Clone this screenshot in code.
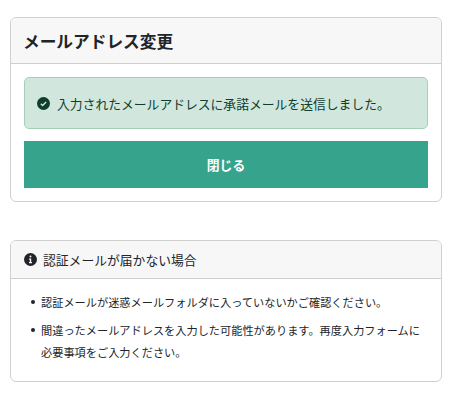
<script>
  let closed = false;
</script>

<main class="page">
  <section class="card first">
    <h1 class="card-head title">メールアドレス変更</h1>
    <div class="card-body">
      <div class="alert">
        <svg class="icon" viewBox="0 0 512 512" aria-hidden="true">
          <circle cx="256" cy="256" r="256" fill="#0f3d2e" />
          <path d="M152 262l70 70 138-138" fill="none" stroke="#d1e7dd" stroke-width="56" />
        </svg>
        <span>入力されたメールアドレスに承諾メールを送信しました。</span>
      </div>
      <button type="button" class="btn" on:click={() => (closed = true)}>閉じる</button>
    </div>
  </section>

  <section class="card second">
    <h2 class="card-head sub">
      <svg class="icon" viewBox="0 0 512 512" aria-hidden="true">
        <circle cx="256" cy="256" r="256" fill="#212529" />
        <circle cx="256" cy="136" r="38" fill="#f7f7f7" />
        <path d="M200 218h84v134h32v50H196v-50h32v-84h-28z" fill="#f7f7f7" />
      </svg>
      認証メールが届かない場合
    </h2>
    <ul class="notes">
      <li>認証メールが迷惑メールフォルダに入っていないかご確認ください。</li>
      <li>間違ったメールアドレスを入力した可能性があります。再度入力フォームに必要事項をご入力ください。</li>
    </ul>
  </section>
</main>

<style>
  * {
    box-sizing: border-box;
  }
  :global(body) {
    margin: 0;
    background: #fff;
    font-family: "Noto Sans CJK JP", "Noto Sans", sans-serif;
    color: #212529;
  }

  .page {
    padding: 17px 10px 0;
    height: 400px;
    overflow: hidden;
  }

  .card {
    border: 1px solid #d0d0d0;
    border-radius: 6px;
    overflow: hidden;
    background: #fff;
  }
  .second {
    margin-top: 38px;
  }

  .card-head {
    margin: 0;
    background: #f7f7f7;
    border-bottom: 1px solid #cfcfcf;
    display: flex;
    align-items: center;
  }
  .title {
    height: 46px;
    padding: 1px 12px 0;
    font-size: 16.7px;
    font-weight: 700;
    line-height: 1;
  }
  .sub {
    height: 38px;
    padding: 0 13px;
    font-size: 12.8px;
    font-weight: 400;
    gap: 6px;
  }

  .card-body {
    padding: 13px 13px 13px;
    display: flex;
    flex-direction: column;
    gap: 12px;
  }

  .alert {
    height: 52px;
    padding: 0 12px;
    display: flex;
    align-items: center;
    gap: 7px;
    background: #d1e7dd;
    border: 1px solid #a3cfbb;
    border-radius: 5px;
    color: #0f3d2e;
    font-size: 12.8px;
    white-space: nowrap;
  }

  .icon {
    width: 13px;
    height: 13px;
    flex: none;
  }

  .btn {
    height: 47px;
    border: none;
    background: #36a48d;
    color: #fff;
    font-family: inherit;
    font-size: 12.8px;
    font-weight: 700;
    cursor: pointer;
  }

  .notes {
    margin: 0;
    padding: 12px 12px 18px 30px;
    list-style: none;
    font-size: 11.2px;
    line-height: 22px;
    color: #212529;
  }
  .notes li {
    position: relative;
  }
  .notes li::before {
    content: "";
    position: absolute;
    left: -10px;
    top: 9px;
    width: 4px;
    height: 4px;
    border-radius: 50%;
    background: #212529;
  }
  .notes li + li {
    margin-top: 6px;
  }
</style>
